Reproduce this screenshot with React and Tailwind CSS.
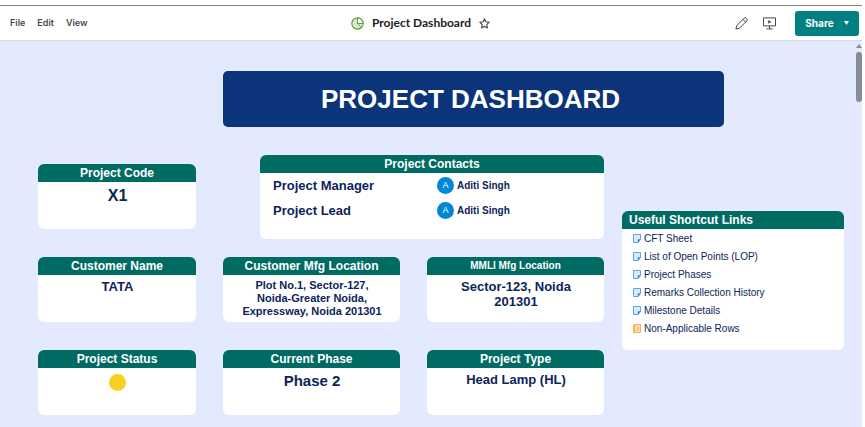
import React from 'react';

const shortcuts = [
  { label: 'CFT Sheet', kind: 'sheet' },
  { label: 'List of Open Points (LOP)', kind: 'sheet' },
  { label: 'Project Phases', kind: 'sheet' },
  { label: 'Remarks Collection History', kind: 'sheet' },
  { label: 'Milestone Details', kind: 'sheet' },
  { label: 'Non-Applicable Rows', kind: 'report' },
];

const contacts = [
  { role: 'Project Manager', name: 'Aditi Singh' },
  { role: 'Project Lead', name: 'Aditi Singh' },
];

const SheetIcon = () => (
  <svg width="8" height="9" viewBox="0 0 8 9" fill="none" aria-hidden="true">
    <path d="M.5.5h7v5L5 8.5H.5z" fill="#d6eafc" stroke="#5ba6dc" />
    <path d="M7.5 5.5H5v3z" fill="#3f92d0" stroke="#3f92d0" strokeWidth=".6" />
  </svg>
);

const ReportIcon = () => (
  <svg width="8" height="9" viewBox="0 0 8 9" fill="none" aria-hidden="true">
    <rect x=".5" y=".5" width="7" height="8" rx=".6" fill="#fde3b8" stroke="#f4ad4e" />
    <path d="M1.7 .5v8" stroke="#f4ad4e" />
    <path d="M3.6 3h2.6M3.6 4.7h2.6M3.6 6.3h2.6" stroke="#f0a03c" strokeWidth=".7" />
  </svg>
);

const PieIcon = () => (
  <svg width="13" height="13" viewBox="0 0 13 13" fill="none" stroke="#6aa344" aria-hidden="true">
    <circle cx="6.5" cy="6.5" r="5.7" fill="#d9ecca" strokeWidth="1.2" />
    <path d="M6.5 .9v5.6h5.6A5.6 5.6 0 0 0 6.5.9z" fill="#fff" strokeWidth="1.1" />
    <path d="M6.5 6.5l3.9 4" />
  </svg>
);

const StarIcon = () => (
  <svg width="11" height="11" viewBox="0 0 11 11" fill="none" stroke="#444" strokeWidth="1.1" strokeLinejoin="round" aria-hidden="true">
    <path d="M5.5.8l1.4 3 3.3.4-2.4 2.3.6 3.4-2.9-1.6-2.9 1.6.6-3.4L.8 4.2l3.3-.4z" />
  </svg>
);

const PencilIcon = () => (
  <svg width="13" height="13" viewBox="0 0 13 13" fill="none" stroke="#4a4a4a" strokeLinejoin="round" aria-hidden="true">
    <path d="M.9 12.1l.9-3.6L9.2 1.1a1.3 1.3 0 0 1 1.8 0l.9.9a1.3 1.3 0 0 1 0 1.8L4.5 11.2z" />
    <path d="M8 2.3L10.7 5" />
  </svg>
);

const PresentIcon = () => (
  <svg width="13" height="13" viewBox="0 0 13 13" fill="none" stroke="#4a4a4a" aria-hidden="true">
    <path d="M.5 .9h12v8H.5zM6.5 8.9v2.8M3.4 11.9h6.2" />
    <path d="M5.2 3l3.2 1.9-3.2 1.9z" fill="#4a4a4a" stroke="none" />
  </svg>
);

const Card = ({ title, titleClass = 'text-[12px]', children }) => (
  <section className="h-[65px] overflow-hidden rounded-md bg-white pl-px text-center font-bold text-[#0c2459]">
    <h2 className={`-ml-px h-[18px] bg-[#006b63] leading-[18px] text-white ${titleClass}`}>{title}</h2>
    {children}
  </section>
);

const Toolbar = () => (
  <header className="mt-[5px] flex h-9 items-center justify-between border-t border-b border-t-[#85817a] border-b-[#d5dce6] bg-white pr-[3px] pl-[10px]">
    <nav className="flex flex-1 gap-3 font-['Inter',sans-serif] text-[9px] font-semibold text-[#4a4a4a]">
      <button type="button">File</button>
      <button type="button">Edit</button>
      <button type="button">View</button>
    </nav>
    <div className="mr-7 flex items-center">
      <PieIcon />
      <span className="ml-2 font-['Lato',sans-serif] text-[12px] font-bold text-[#222]">Project Dashboard</span>
      <button type="button" aria-label="Add to favorites" className="ml-2">
        <StarIcon />
      </button>
    </div>
    <div className="flex flex-1 items-center justify-end">
      <button type="button" aria-label="Edit dashboard" className="mr-[15px]">
        <PencilIcon />
      </button>
      <button type="button" aria-label="Present" className="mr-[19px]">
        <PresentIcon />
      </button>
      <button type="button" className="flex h-[25px] w-16 items-center justify-center gap-2.5 rounded-[3px] bg-[#008080] font-['Inter',sans-serif] text-[10px] font-bold text-white">
        Share
        <svg width="5" height="4" viewBox="0 0 5 4" fill="currentColor" aria-hidden="true">
          <path d="M0 0h5L2.5 4z" />
        </svg>
      </button>
    </div>
  </header>
);

const Contacts = () => (
  <section className="ml-[37px] h-[84px] overflow-hidden rounded-md bg-white font-bold text-[#0c2459]">
    <h2 className="h-[18px] bg-[#006b63] text-center text-[12px] leading-[18px] text-white">Project Contacts</h2>
    <ul>
      {contacts.map((c) => (
        <li key={c.role} className="grid h-[25px] grid-cols-[164fr_167fr] items-center pl-[13px]">
          <span className="text-[13px]">{c.role}</span>
          <span className="flex items-center gap-[3px] text-[10px]">
            <span className="flex size-[17px] items-center justify-center rounded-full bg-[#0088d4] text-[9px] font-normal text-white">A</span>
            {c.name}
          </span>
        </li>
      ))}
    </ul>
  </section>
);

const Shortcuts = () => (
  <aside className="mt-14 h-[139px] w-[222px] shrink-0 overflow-hidden rounded-md bg-white">
    <h2 className="h-[18px] bg-[#006b63] pl-[7px] text-[12px] leading-[18px] font-bold text-white">Useful Shortcut Links</h2>
    <ul>
      {shortcuts.map(({ label, kind }) => (
        <li key={label}>
          <a href="#" className="flex h-[18px] items-center gap-[3px] pl-[11px] text-[10px] text-[#0c2459]">
            {kind === 'sheet' ? <SheetIcon /> : <ReportIcon />}
            {label}
          </a>
        </li>
      ))}
    </ul>
  </aside>
);

const App = () => {
  return (
    <div className="flex min-h-screen flex-col bg-white pr-[3px] font-['Liberation_Sans',Arial,sans-serif]">
      <Toolbar />
      <div className="flex flex-1 bg-[#e3eafd]">
        <main className="flex-1 pt-[30px] pr-[9px] pb-3 pl-[38px]">
          <h1 className="mr-[120px] ml-[185px] h-14 rounded-[5px] bg-[#0b347b] pr-1.5 text-center text-[26px] leading-[56px] font-bold text-white">
            PROJECT DASHBOARD
          </h1>
          <div className="mt-7 flex items-start gap-[18px]">
            <div className="flex flex-1 gap-[27px]">
              <div className="flex flex-[158] flex-col gap-7 pt-[9px]">
                <Card title="Project Code">
                  <p className="text-[16px] leading-7">X1</p>
                </Card>
                <Card title="Customer Name">
                  <p className="text-[13px] leading-6">TATA</p>
                </Card>
                <Card title="Project Status">
                  <div className="mx-auto mt-[6px] size-[17px] rounded-full bg-[#f7d022]" role="img" aria-label="Yellow" />
                </Card>
              </div>
              <div className="flex-[381]">
                <Contacts />
                <div className="mt-[18px] grid grid-cols-2 gap-x-[27px] gap-y-7">
                  <Card title="Customer Mfg Location">
                    <p className="mt-1 text-[11px] leading-[13px]">
                      Plot No.1, Sector-127,
                      <br />
                      Noida-Greater Noida,
                      <br />
                      Expressway, Noida 201301
                    </p>
                  </Card>
                  <Card title="MMLI Mfg Location" titleClass="text-[10px]">
                    <p className="mt-1 text-[13px] leading-[15px]">
                      Sector-123, Noida
                      <br />
                      201301
                    </p>
                  </Card>
                  <Card title="Current Phase">
                    <p className="text-[15px] leading-[26px]">Phase 2</p>
                  </Card>
                  <Card title="Project Type">
                    <p className="text-[13px] leading-6">Head Lamp (HL)</p>
                  </Card>
                </div>
              </div>
            </div>
            <Shortcuts />
          </div>
        </main>
        <div className="flex w-[9px] flex-col items-end pt-[3px]" aria-hidden="true">
          <svg width="6" height="4" viewBox="0 0 6 4" fill="#858b98">
            <path d="M3 0l3 4H0z" />
          </svg>
          <div className="mt-1 h-[50px] w-[6px] rounded-full bg-[#858b98]" />
        </div>
      </div>
    </div>
  );
};

export default App;
